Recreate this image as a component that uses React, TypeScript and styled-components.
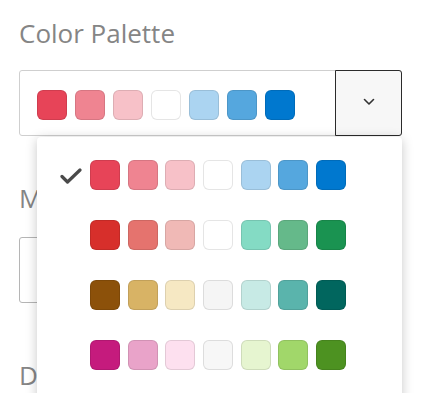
import React from "react";
import styled, { createGlobalStyle } from "styled-components";

const Global = createGlobalStyle`
  html, body { margin: 0; padding: 0; background: #fff; }
  body { font-family: "Open Sans", sans-serif; overflow: hidden; }
`;

const Page = styled.div`
  padding: 16px 19px 0 19px;
  width: 383px;
  display: flex;
  flex-direction: column;
`;

const Field = styled.div<{ $gap: number; $after: number }>`
  display: flex;
  flex-direction: column;
  gap: ${(p) => p.$gap}px;
  margin-bottom: ${(p) => p.$after}px;
`;

const Label = styled.div`
  font-size: 26px;
  line-height: 35px;
  color: #858585;
`;

const SelectWrap = styled.div`
  position: relative;
`;

const Select = styled.div`
  display: flex;
  height: 66px;
  box-sizing: border-box;
  border: 1px solid #cfcfcf;
  border-radius: 3px;
`;

const SelectValue = styled.div`
  flex: 1;
  display: flex;
  align-items: center;
  gap: 8px;
  padding: 4px 17px 0 17px;
`;

const ToggleButton = styled.div`
  width: 67px;
  margin: -1px -1px -1px 0;
  box-sizing: border-box;
  border: 1.5px solid #2b2b2b;
  border-radius: 0 3px 3px 0;
  background: #f7f7f7;
  display: flex;
  align-items: center;
  justify-content: center;
  padding-bottom: 3px;
`;

const Swatch = styled.div<{ $c: string }>`
  width: 30px;
  height: 30px;
  box-sizing: border-box;
  border-radius: 6px;
  background: ${(p) => p.$c};
  border: 1px solid rgba(0, 0, 0, 0.1);
`;

const Input = styled.div`
  height: 66px;
  box-sizing: border-box;
  border: 1px solid #b5b5b5;
  border-radius: 3px;
`;

const Menu = styled.div`
  position: absolute;
  left: 18px;
  top: calc(100% + 1px);
  width: 365px;
  height: 300px;
  background: #fff;
  border-radius: 4px 4px 0 0;
  box-shadow: 0 2px 12px rgba(0, 0, 0, 0.22);
  padding-top: 23px;
  box-sizing: border-box;
  display: flex;
  flex-direction: column;
  gap: 30px;
  z-index: 2;
`;

const MenuRow = styled.div`
  display: flex;
  align-items: center;
`;

const CheckCell = styled.div`
  width: 53px;
  display: flex;
  justify-content: flex-end;
  padding-right: 8px;
  box-sizing: border-box;
  padding-top: 2px;
`;

const Swatches = styled.div`
  display: flex;
  gap: 7.7px;
`;

const palettes = [
  ["#e74458", "#ef8491", "#f7c1c8", "#ffffff", "#abd4f1", "#55a7de", "#0078cf"],
  ["#d72f2b", "#e5736e", "#f0b9b6", "#ffffff", "#84dbc4", "#65b98a", "#1a9351"],
  ["#8c510a", "#d8b365", "#f6e8c3", "#f5f5f5", "#c7eae5", "#5ab4ac", "#01665e"],
  ["#c51b7d", "#e9a3c9", "#fde0ef", "#f7f7f7", "#e6f5d0", "#a1d76a", "#4d9221"],
];

const Check = () => (
  <svg width="22" height="18" viewBox="0 0 22 18">
    <path d="M2 9.5 L7.5 15 L20 3" fill="none" stroke="#4a4a4a" strokeWidth="3.2" strokeLinecap="round" strokeLinejoin="round" />
  </svg>
);

const Chevron = () => (
  <svg width="12" height="8" viewBox="0 0 12 8">
    <path d="M1.5 1.5 L6 6 L10.5 1.5" fill="none" stroke="#333" strokeWidth="1.6" strokeLinecap="round" strokeLinejoin="round" />
  </svg>
);

export default function App() {
  return (
    <Page>
      <Global />
      <Field $gap={19} $after={45}>
        <Label>Color Palette</Label>
        <SelectWrap>
          <Select>
            <SelectValue>
              {palettes[0].map((c) => (
                <Swatch key={c} $c={c} />
              ))}
            </SelectValue>
            <ToggleButton>
              <Chevron />
            </ToggleButton>
          </Select>
          <Menu>
            {palettes.map((row, i) => (
              <MenuRow key={i}>
                <CheckCell>{i === 0 ? <Check /> : null}</CheckCell>
                <Swatches>
                  {row.map((c, j) => (
                    <Swatch key={j} $c={c} />
                  ))}
                </Swatches>
              </MenuRow>
            ))}
          </Menu>
        </SelectWrap>
      </Field>
      <Field $gap={21} $after={55}>
        <Label>Mode</Label>
        <Input />
      </Field>
      <Field $gap={20} $after={0}>
        <Label>Data</Label>
      </Field>
    </Page>
  );
}
